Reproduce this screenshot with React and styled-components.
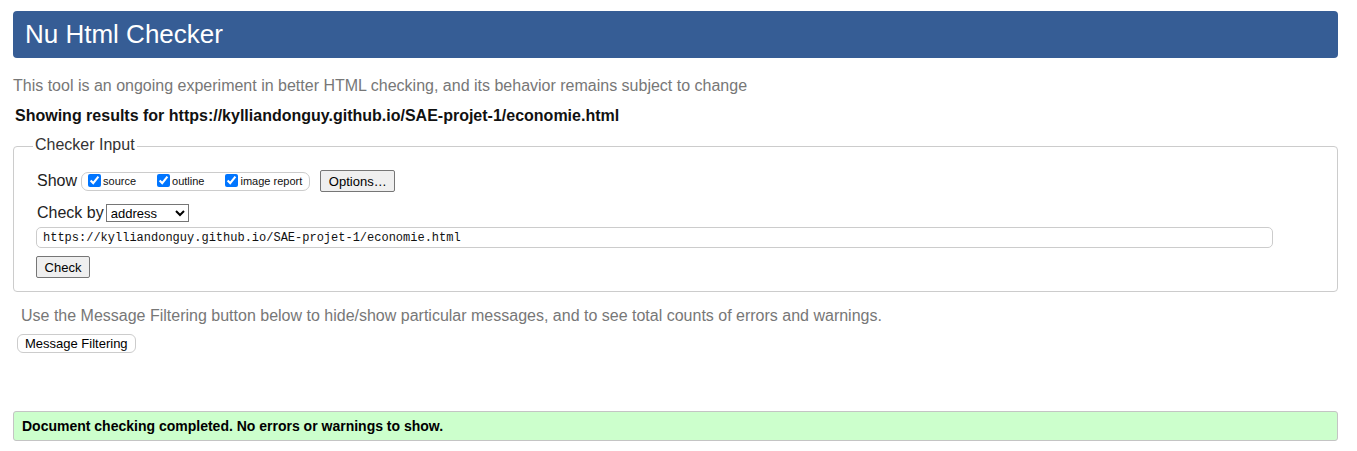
import styled, { createGlobalStyle } from "styled-components";

const GlobalStyle = createGlobalStyle`
    html, body {
        margin: 0;
        padding: 0;
        background: #fff;
        font-family: "Liberation Sans", Arial, sans-serif;
    }
`;

const Page = styled.div`
    padding: 11px 19px 0 13px;
`;

const Header = styled.h1`
    margin: 0;
    height: 47px;
    line-height: 47px;
    padding-left: 12px;
    background: #365d95;
    border-radius: 4px;
    color: #fff;
    font-size: 26px;
    font-weight: normal;
`;

const Intro = styled.p`
    margin: 18px 0 0;
    font-size: 16px;
    line-height: 20px;
    color: #777;
`;

const Results = styled.p`
    margin: 11px 0 0 2px;
    font-size: 16px;
    line-height: 18px;
    font-weight: bold;
    color: #111;
`;

const Fieldset = styled.fieldset`
    margin: 9px 0 0;
    padding: 0 0 13px 0;
    border: 1px solid #ccc;
    border-radius: 4px;
    min-width: 0;

    legend {
        margin-left: 19px;
        padding: 1px 2px 3px;
        font-size: 16px;
        line-height: 20px;
        color: #333;
    }
`;

const Content = styled.div`
    padding-left: 23px;
`;

const Row = styled.div`
    display: flex;
    align-items: center;
    height: ${p => p.$h || 22}px;
    margin-top: ${p => p.$mt || 0}px;
`;

const Label = styled.span`
    font-size: 16px;
    color: #222;
    margin-right: ${p => p.$gap || 4}px;
`;

const CheckGroup = styled.span`
    display: inline-flex;
    align-items: center;
    height: 17px;
    padding: 0 7px 0 6px;
    border: 1px solid #ccc;
    border-radius: 7px;
    margin-right: 10px;
`;

const Option = styled.label`
    display: inline-flex;
    align-items: center;
    font-size: 11px;
    color: #111;
    margin-right: ${p => p.$gap || 0}px;

    input {
        width: 13px;
        height: 13px;
        margin: 0 2px 2px 0;
    }
`;

const Button = styled.button`
    height: 22px;
    padding: 0 8px;
    font-family: "Liberation Sans", Arial, sans-serif;
    font-size: 13px;
    color: #000;
    background: #efefef;
    border: 1px solid #767676;
    border-radius: 2px;
`;

const OptionsButton = styled(Button)`
    width: 75px;
    padding: 0;
`;

const Select = styled.select`
    width: 83px;
    height: 18px;
    font-family: "Liberation Sans", Arial, sans-serif;
    font-size: 13px;
    padding: 0;
    border: 1px solid #767676;
    border-radius: 0;
    background: #fff;
    color: #000;
`;

const UrlInput = styled.input`
    display: block;
    box-sizing: border-box;
    width: 1237px;
    height: 21px;
    margin: 4px 0 0 -1px;
    padding: 0 6px;
    border: 1px solid #ccc;
    border-radius: 5px;
    font-family: "Liberation Mono", "Courier New", monospace;
    font-size: 12px;
    color: #111;
`;

const CheckButton = styled(Button)`
    display: block;
    width: 54px;
    margin: 8px 0 0 -1px;
    padding: 0;
`;

const Hint = styled.p`
    margin: 14px 0 0 8px;
    font-size: 16px;
    line-height: 20px;
    color: #777;
`;

const FilterButton = styled.button`
    display: block;
    height: 19px;
    margin: 8px 0 0 4px;
    padding: 0 7px;
    font-family: "Liberation Sans", Arial, sans-serif;
    font-size: 13px;
    color: #000;
    background: #fff;
    border: 1px solid #ccc;
    border-radius: 6px;
`;

const Success = styled.div`
    margin-top: 58px;
    height: 28px;
    line-height: 28px;
    padding-left: 8px;
    background: #ccffcc;
    border: 1px solid #c4c4c4;
    border-radius: 3px;
    font-size: 14px;
    font-weight: bold;
    color: #000;
`;

const url = "https://kylliandonguy.github.io/SAE-projet-1/economie.html";

const App = () => {
    return (
        <>
            <GlobalStyle />
            <Page>
                <Header>Nu Html Checker</Header>
                <Intro>
                    This tool is an ongoing experiment in better HTML checking, and its behavior remains subject to change
                </Intro>
                <Results>Showing results for {url}</Results>

                <Fieldset>
                    <legend>Checker Input</legend>
                    <Content>
                        <Row $mt={12}>
                            <Label>Show</Label>
                            <CheckGroup>
                                <Option $gap={21}><input type="checkbox" defaultChecked />source</Option>
                                <Option $gap={21}><input type="checkbox" defaultChecked />outline</Option>
                                <Option><input type="checkbox" defaultChecked />image report</Option>
                            </CheckGroup>
                            <OptionsButton>Options…</OptionsButton>
                        </Row>
                        <Row $mt={11} $h={20}>
                            <Label $gap={2}>Check by</Label>
                            <Select defaultValue="address">
                                <option value="address">address</option>
                                <option value="file">file upload</option>
                                <option value="text">text input</option>
                            </Select>
                        </Row>
                        <UrlInput type="url" defaultValue={url} />
                        <CheckButton>Check</CheckButton>
                    </Content>
                </Fieldset>

                <Hint>
                    Use the Message Filtering button below to hide/show particular messages, and to see total counts of errors and warnings.
                </Hint>
                <FilterButton>Message Filtering</FilterButton>

                <Success>Document checking completed. No errors or warnings to show.</Success>
            </Page>
        </>
    );
};

export default App;
